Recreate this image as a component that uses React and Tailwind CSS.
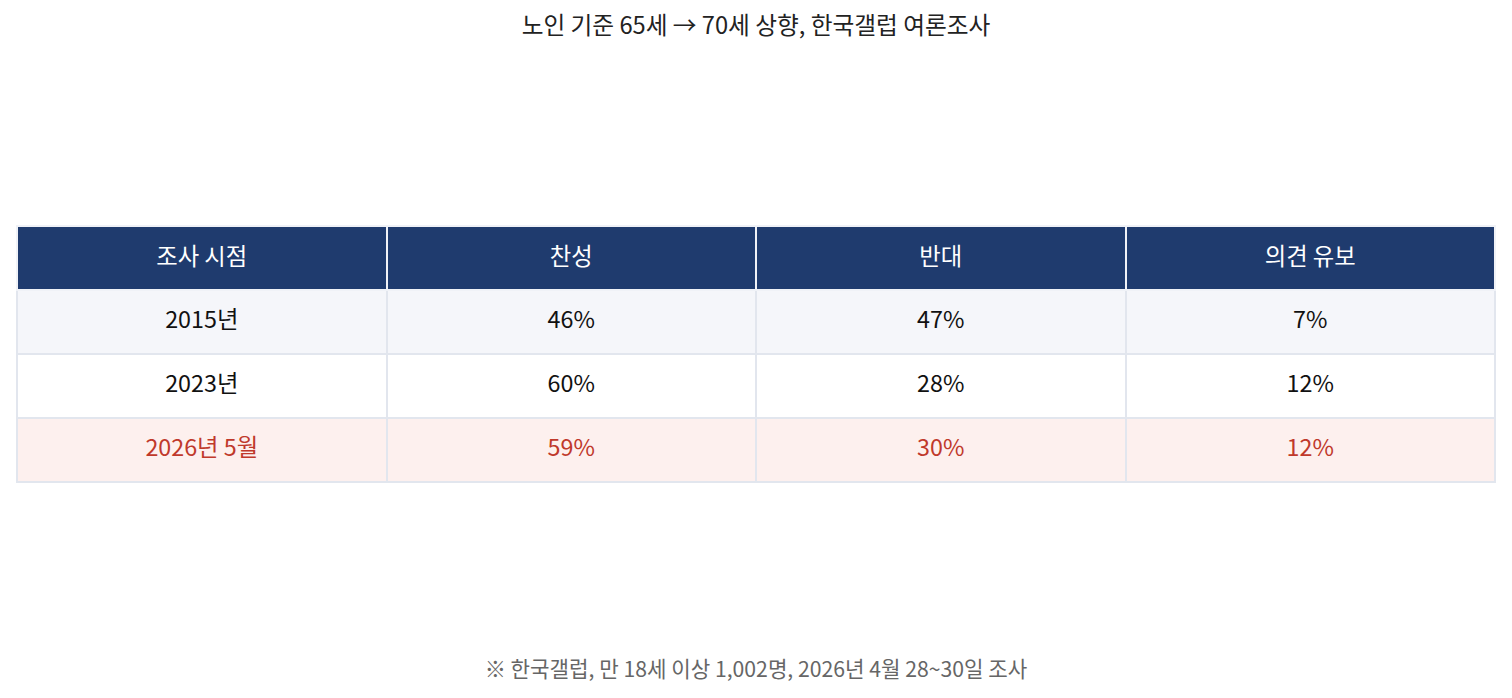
import React from "react";

const rows = [
  { label: "2015년", yes: "46%", no: "47%", none: "7%", bg: "bg-[#f5f6fa]", text: "text-[#111111]" },
  { label: "2023년", yes: "60%", no: "28%", none: "12%", bg: "bg-white", text: "text-[#111111]" },
  { label: "2026년 5월", yes: "59%", no: "30%", none: "12%", bg: "bg-[#fdf0ee]", text: "text-[#c0392b]" },
];

function App() {
  return (
    <div
      className="w-full h-[698px] bg-white flex flex-col items-center px-4"
      style={{ fontFamily: '"Noto Sans CJK KR", "Noto Sans", sans-serif' }}
    >
      <h1 className="mt-[8px] text-[23.7px] leading-[32px] font-normal text-[#222222]">
        노인 기준 65세 → 70세 상향, 한국갤럽 여론조사
      </h1>

      <div className="flex-1 w-full flex items-center">
        <table className="w-full table-fixed border-collapse text-[23.3px] leading-[30px] mt-[13px]">
          <thead>
            <tr className="bg-[#1f3b6e] text-white">
              <th className="h-[64px] pb-[6px] font-normal border-2 border-[#f0f2f7]">조사 시점</th>
              <th className="h-[64px] pb-[6px] font-normal border-2 border-[#f0f2f7]">찬성</th>
              <th className="h-[64px] pb-[6px] font-normal border-2 border-[#f0f2f7]">반대</th>
              <th className="h-[64px] pb-[6px] font-normal border-2 border-[#f0f2f7]">의견 유보</th>
            </tr>
          </thead>
          <tbody>
            {rows.map((r) => (
              <tr key={r.label} className={`${r.bg} ${r.text}`}>
                <td className="h-[64px] pb-[8px] text-center border-2 border-[#e2e6ee]">{r.label}</td>
                <td className="h-[64px] pb-[8px] text-center border-2 border-[#e2e6ee]">{r.yes}</td>
                <td className="h-[64px] pb-[8px] text-center border-2 border-[#e2e6ee]">{r.no}</td>
                <td className="h-[64px] pb-[8px] text-center border-2 border-[#e2e6ee]">{r.none}</td>
              </tr>
            ))}
          </tbody>
        </table>
      </div>

      <p className="mb-[16px] text-[21.2px] leading-[28px] text-[#666666]">
        ※ 한국갤럽, 만 18세 이상 1,002명, 2026년 4월 28~30일 조사
      </p>
    </div>
  );
}

export default App;
